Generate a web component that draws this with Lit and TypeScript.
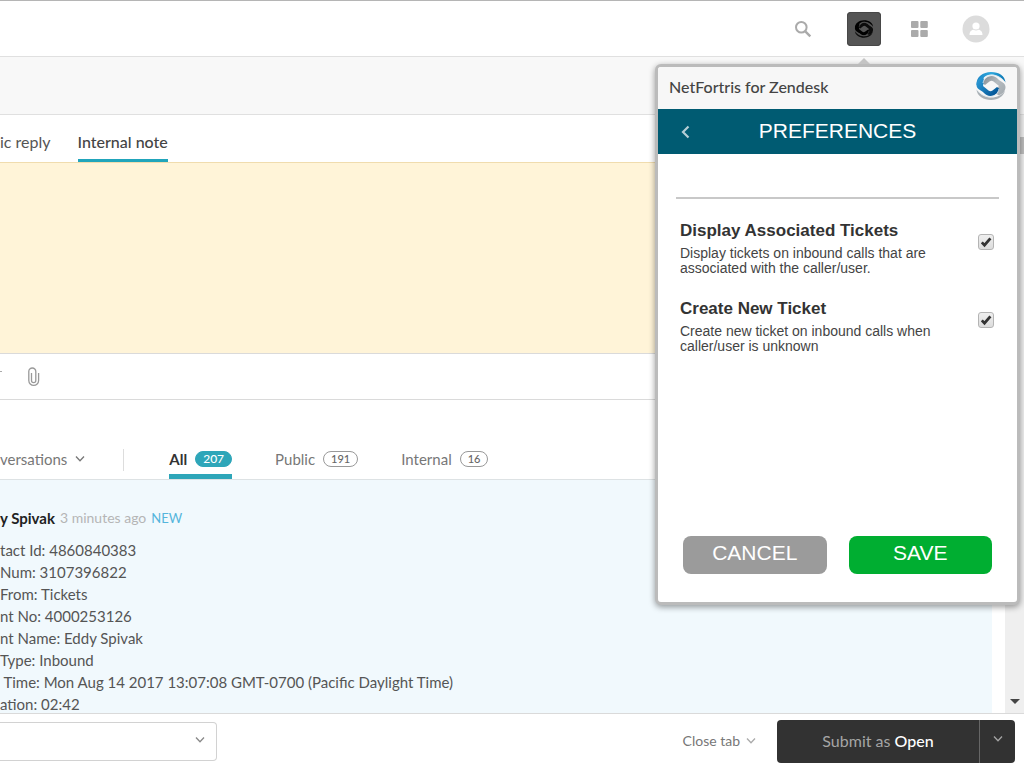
import { LitElement, html, svg, css } from "lit";
import { customElement, property, state } from "lit/decorators.js";

const chevron = html`<svg class="chevron" width="10" height="8" viewBox="0 0 10 8" fill="none" stroke="currentColor" stroke-width="1.3" aria-hidden="true"><path d="M1 1.5 5 5.7 9 1.5"/></svg>`;

// Two interlocking bands, each the other's half-turn about the open centre.
const swirl = (upper: string, upperDeep: string, lower: string, lowerDeep: string, gap: string) => svg`
  <path fill=${lower} d="M.5 17.500C3 21 8 25 14 25.500c6 .5 12-2 15-7C28 24 22 28 15 28 8 28 1 24 .5 17.500Z"/>
  <path fill=${lowerDeep} d="M6.500 11C8 7 11.500 4 15.500 4c3 0 5 1.500 7 3.500 3 2.500 7 3.500 7 7.500 0 4-3 7-6.500 8.500L17 20l6-6-5.500-4.500q-2-1.500-4 0L9 13Z"/>
  <path fill=${upper} d="M29.500 10.500C27 7 22 3 16 2.500 10 2 6 6 5.500 11L.5 13C0 5 7 0 15 0s14 4 14.500 10.500Z"/>
  <path fill=${upperDeep} d="M23.500 17C22 21 18.500 24 14.500 24c-3 0-5-1.500-7-3.500C4.500 18 .5 17 .5 13c0-4 3-7 6.500-8.500L8 8l-1 6 5.500 4.500q2 1.500 4 0L21 15Z"/>
  <path fill="none" stroke=${gap} stroke-width=".9" d="M29 10C25 5 20 3 15.500 3.300 11 3.500 8 6.500 7 11M1 18c4 5 9 7 13.500 6.700 4.500-.2 7.500-3.200 8.500-7.700"/>`;

@customElement("preference-row")
class PreferenceRow extends LitElement {
  @property() heading = "";
  @property() text = "";
  @state() checked = true;

  static styles = css`
    :host { display: block; }
    .row { display: flex; align-items: flex-start; justify-content: space-between; }
    .heading { font-size: 17px; line-height: 20px; font-weight: bold; color: #333; margin-bottom: 5px; }
    .text { font-size: 14px; line-height: 15px; color: #444; max-width: 260px; }
    .box {
      appearance: none; width: 16px; height: 16px; margin: 13px 0 0; flex: none;
      border: 1px solid #b4b4b4; border-radius: 3px;
      background: linear-gradient(#efefef, #dcdcdc);
    }
    .box:checked {
      background: url("data:image/svg+xml,%3Csvg xmlns='http://www.w3.org/2000/svg' viewBox='0 0 14 14'%3E%3Cpath d='M2.8 7.4 5.5 10.2 11.4 3.4' fill='none' stroke='%23333' stroke-width='2.8'/%3E%3C/svg%3E"),
        linear-gradient(#efefef, #dcdcdc);
    }
  `;

  render() {
    return html`<label class="row">
      <span>
        <div class="heading">${this.heading}</div>
        <div class="text">${this.text}</div>
      </span>
      <input class="box" type="checkbox" .checked=${this.checked}
        @change=${(e: Event) => (this.checked = (e.target as HTMLInputElement).checked)} />
    </label>`;
  }
}

@customElement("preferences-panel")
class PreferencesPanel extends LitElement {
  static styles = css`
    :host { display: block; font-family: "Liberation Sans", Arial, sans-serif; }
    .panel {
      display: flex; flex-direction: column; height: 100%; box-sizing: border-box;
      border: 3px solid #bbb; border-radius: 6px; background: #fff;
      box-shadow: 0 2px 6px rgba(0, 0, 0, 0.4);
    }
    .title {
      display: flex; align-items: center; justify-content: space-between;
      height: 42px; padding: 0 11px; background: #f7f7f7; border-radius: 3px 3px 0 0;
      font: 500 16px/22px Lato, sans-serif; color: #444;
    }
    .name, .title span { padding-bottom: 2px; }
    .logo { margin-bottom: 5px; }
    .bar {
      display: grid; grid-template-columns: 54px 1fr 54px; align-items: center;
      height: 45px; background: #005b72; color: #fff;
    }
    .back { border: 0; background: none; padding: 0; height: 45px; color: #b5ced5; display: grid; place-items: center; }
    .name { margin: 0; text-align: center; font-size: 21px; line-height: 24px; font-weight: normal; }
    .body { flex: 1; display: flex; flex-direction: column; gap: 23px; margin: 43px 18px 0; border-top: 2px solid #c8c8c8; padding: 22px 5px 0 4px; }
    .actions { display: grid; grid-template-columns: 1fr 1fr; gap: 22px; padding: 0 25px 28px; }
    .action { height: 38px; border: 0; border-radius: 8px; padding: 0 0 4px; color: #fff; font: 21px/24px "Liberation Sans", Arial, sans-serif; }
    .cancel { background: #9b9b9b; }
    .save { background: #00ae31; }
  `;

  render() {
    return html`<section class="panel">
      <div class="title">
        <span>NetFortris for Zendesk</span>
        <svg class="logo" width="30" height="28" viewBox="0 0 30 28" aria-hidden="true">
          <defs>
            <linearGradient id="blue" gradientUnits="userSpaceOnUse" x1="0" y1="0" x2="30" y2="0"><stop stop-color="#1a84c4"/><stop offset=".5" stop-color="#2fa8de"/><stop offset="1" stop-color="#0873af"/></linearGradient>
            <linearGradient id="deep" gradientUnits="userSpaceOnUse" x1="2" y1="8" x2="18" y2="22"><stop stop-color="#2b98d4"/><stop offset="1" stop-color="#055a9b"/></linearGradient>
            <linearGradient id="grey" gradientUnits="userSpaceOnUse" x1="8" y1="6" x2="28" y2="22"><stop stop-color="#8a9197"/><stop offset=".5" stop-color="#b6bcc0"/><stop offset="1" stop-color="#a4abb0"/></linearGradient>
          </defs>
          ${swirl("url(#blue)", "url(#deep)", "#a9b0b5", "url(#grey)", "#dde8ee")}
        </svg>
      </div>
      <div class="bar">
        <button class="back" aria-label="Back">
          <svg width="9" height="14" viewBox="0 0 9 14" fill="none" stroke="currentColor" stroke-width="2.2"><path d="M7.5 1.5 2 7l5.5 5.5"/></svg>
        </button>
        <h1 class="name">PREFERENCES</h1>
      </div>
      <div class="body">
        <preference-row heading="Display Associated Tickets" text="Display tickets on inbound calls that are associated with the caller/user."></preference-row>
        <preference-row heading="Create New Ticket" text="Create new ticket on inbound calls when caller/user is unknown"></preference-row>
      </div>
      <div class="actions">
        <button class="action cancel">CANCEL</button>
        <button class="action save">SAVE</button>
      </div>
    </section>`;
  }
}

@customElement("app-root")
class AppRoot extends LitElement {
  private lines = [
    "tact Id: 4860840383",
    "Num: 3107396822",
    "From: Tickets",
    "nt No: 4000253126",
    "nt Name: Eddy Spivak",
    "Type: Inbound",
    " Time: Mon Aug 14 2017 13:07:08 GMT-0700 (Pacific Daylight Time)",
    "ation: 02:42",
  ];

  static styles = css`
    :host {
      display: flex; flex-direction: column; height: 100vh; position: relative; overflow: hidden;
      background: #fff; color: #555; font: 15px/22px Lato, sans-serif;
    }
    button { font: inherit; color: inherit; border: 0; background: none; padding: 0; }
    .top {
      display: flex; align-items: center; justify-content: flex-end; flex: none; box-sizing: border-box;
      height: 57px; border-top: 1px solid #b5b5b5; border-bottom: 1px solid #e0e0e0; padding-right: 34px;
    }
    .tool { display: grid; place-items: center; }
    .search { margin-right: 35px; }
    .app { width: 34px; height: 34px; border-radius: 4px; background: #555; box-shadow: inset 0 0 0 1px #484848; margin-right: 30px; }
    .grid { margin-right: 34px; }
    .sub { flex: none; height: 57px; background: #f8f8f8; border-bottom: 1px solid #e0e0e0; }
    .middle { flex: 1; min-height: 0; display: flex; }
    .content { flex: 1; min-width: 0; display: flex; flex-direction: column; overflow: hidden; }
    .modes { display: flex; gap: 27px; height: 47px; align-items: flex-end; flex: none; border-bottom: 1px solid #f0dcae; font-size: 16px; }
    .mode { height: 32px; padding-bottom: 6px; box-sizing: border-box; border-bottom: 3px solid transparent; }
    .mode.on { border-bottom-color: #21a5bb; font-weight: 500; color: #444; }
    .note { flex: none; height: 190px; border: 0; border-bottom: 1px solid #dadada; background: #fff4d8; resize: none; padding: 0; outline: 0; display: block; width: 100%; }
    .attach { flex: none; display: flex; align-items: center; gap: 26px; height: 46px; border-bottom: 1px solid #dadada; box-sizing: border-box; color: #999; }
    .filters { flex: none; display: flex; align-items: flex-end; height: 80px; box-sizing: border-box; border-bottom: 1px solid #dde2e4; color: #777; }
    .filter { display: flex; align-items: center; gap: 8px; height: 34px; padding-bottom: 7px; box-sizing: border-box; }
    .filter.on { color: #333; font-weight: bold; padding-bottom: 2px; border-bottom: 5px solid #2ea6b9; }
    .filter + .filter { margin-left: 43px; }
    .rule { width: 1px; height: 22px; background: #ddd; margin: 0 45px 8px 38px; }
    .count { border: 1px solid #999; border-radius: 9px; padding: 0 7px; font: 500 11px/14px Lato, sans-serif; color: #666; }
    .on .count { background: #2ea6b9; border-color: #2ea6b9; color: #fff; font-size: 12px; }
    .log { flex: 1; min-height: 0; overflow: hidden; background: #f1f9fd; margin-right: 13px; padding-top: 27px; }
    .byline { display: flex; gap: 5px; font-size: 13px; color: #b5b5b5; margin-bottom: 10px; }
    .ago { font-size: 14px; }
    .author { font-size: 15px; font-weight: bold; color: #222; }
    .new { color: #55b5dc; }
    .line { white-space: pre; }
    .scroll { width: 19px; flex: none; background: #efefef; display: flex; flex-direction: column; justify-content: space-between; padding: 22px 0 9px; }
    .thumb { height: 17px; background: #bdbdbd; }
    .arrow { align-self: center; border: 5px solid transparent; border-top-color: #444; border-bottom: 0; }
    .foot { flex: none; height: 54px; display: flex; align-items: center; border-top: 1px solid #dadada; padding-right: 9px; }
    .pick { position: relative; width: 217px; margin-right: auto; }
    .select { appearance: none; width: 100%; height: 39px; border: 1px solid #d2d2d2; border-left: 0; border-radius: 0 4px 4px 0; background: #fff; display: block; }
    .pick .chevron { position: absolute; right: 12px; top: 14px; color: #888; pointer-events: none; }
    .close { display: flex; align-items: center; gap: 6px; font-size: 14px; color: #777; margin-right: 21px; }
    .close .chevron { color: #aaa; }
    .submit { display: flex; height: 43px; border-radius: 4px; background: #323232; color: #a5a5a5; overflow: hidden; font-size: 16px; }
    .send { width: 203px; border-right: 1px solid #666; }
    .state { color: #fff; font-weight: 500; }
    .more { width: 35px; display: grid; place-items: center; padding-bottom: 4px; }
    .popup { position: absolute; top: 64px; right: 4px; width: 365px; height: 541px; }
    .popup::before { content: ""; position: absolute; top: -6px; right: 150px; border: 6px solid transparent; border-top: 0; border-bottom-color: #c4c4c4; }
    .popup preferences-panel { height: 100%; }
  `;

  render() {
    return html`
      <header class="top">
        <button class="tool search" aria-label="Search">
          <svg width="18" height="18" viewBox="0 0 18 18" fill="none" stroke="#aaa" stroke-width="2"><circle cx="7.3" cy="7.3" r="5.3"/><path d="m11.3 11.3 5 5" stroke-width="2.4"/></svg>
        </button>
        <button class="tool app" aria-label="NetFortris">
          <svg width="20" height="20" viewBox="-1 -1 32 30">${swirl("#000", "#000", "#0c0c0c", "#0c0c0c", "#484848")}</svg>
        </button>
        <button class="tool grid" aria-label="Products">
          <svg width="17" height="16" viewBox="0 0 17 16" fill="#aaa"><rect width="7.5" height="7" rx="1"/><rect x="9.3" width="7.5" height="7" rx="1"/><rect y="9" width="7.5" height="7" rx="1"/><rect x="9.3" y="9" width="7.5" height="7" rx="1"/></svg>
        </button>
        <button class="tool" aria-label="Profile">
          <svg width="28" height="28" viewBox="0 0 28 28"><circle cx="14" cy="14" r="13.5" fill="#dcdcdc"/><circle cx="14" cy="11" r="3.6" fill="#fff"/><path fill="#fff" d="M7.5 20c0-4 2.5-5 4-5.2a5 5 0 0 0 5 0c1.5.2 4 1.2 4 5.2Z"/></svg>
        </button>
      </header>
      <div class="sub"></div>
      <div class="middle">
        <main class="content">
          <div class="modes">
            <button class="mode">ic reply</button>
            <button class="mode on">Internal note</button>
          </div>
          <textarea class="note" aria-label="Internal note"></textarea>
          <div class="attach">
            <svg width="2" height="14" viewBox="0 0 2 14" aria-hidden="true"><path d="M0 1.5h2" stroke="#aaa"/></svg>
            <button class="tool" aria-label="Attach file">
              <svg width="12" height="20" viewBox="1 0 12 20" fill="none" stroke="currentColor" stroke-width="1.3"><path d="M4.5 6v7.500a2 2 0 0 0 4.300 0V4.500a3.500 3.500 0 0 0-7 0v9a4.900 4.900 0 0 0 9.800 0V6"/></svg>
            </button>
          </div>
          <nav class="filters">
            <button class="filter">versations ${chevron}</button>
            <span class="rule"></span>
            <button class="filter on">All <span class="count">207</span></button>
            <button class="filter">Public <span class="count">191</span></button>
            <button class="filter">Internal <span class="count">16</span></button>
          </nav>
          <article class="log">
            <div class="byline"><span class="author">y Spivak</span><span class="ago">3 minutes ago</span><span class="new">NEW</span></div>
            ${this.lines.map((l) => html`<div class="line">${l}</div>`)}
          </article>
        </main>
        <div class="scroll"><div class="thumb"></div><div class="arrow"></div></div>
      </div>
      <footer class="foot">
        <div class="pick"><select class="select" aria-label="Macro"><option></option></select>${chevron}</div>
        <button class="close">Close tab ${chevron}</button>
        <div class="submit">
          <button class="send">Submit as <span class="state">Open</span></button>
          <button class="more" aria-label="More submit options">${chevron}</button>
        </div>
      </footer>
      <div class="popup"><preferences-panel></preferences-panel></div>
    `;
  }
}
